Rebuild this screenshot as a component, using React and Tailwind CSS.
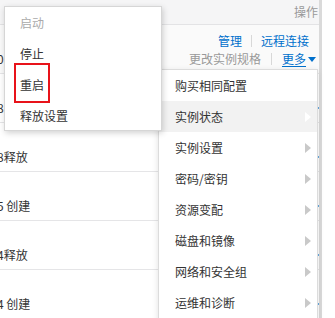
import React from "react";

const font = { fontFamily: '"Noto Sans CJK SC", "Noto Sans", sans-serif' };

function Arrow({ white }) {
  return (
    <svg width="6" height="10" viewBox="0 0 6 10" className="shrink-0">
      <path d="M0 0 L6 5 L0 10 Z" fill={white ? "#ffffff" : "#c9c9c9"} />
    </svg>
  );
}

const leftTails = [
  { t: "0", ml: "-ml-[3px]" },
  { t: "8", ml: "-ml-[3px]" },
  { t: "8释放", ml: "-ml-[3px]" },
  { t: "5 创建", ml: "-ml-[3px]" },
  { t: "4释放", ml: "-ml-[3px]" },
  { t: "4 创建", ml: "-ml-[3px]" },
];

const menu2 = [
  "购买相同配置",
  "实例状态",
  "实例设置",
  "密码/密钥",
  "资源变配",
  "磁盘和镜像",
  "网络和安全组",
  "运维和诊断",
];

export default function App() {
  return (
    <div
      className="relative w-[335px] h-[318px] overflow-hidden bg-white text-[12px] text-[#333]"
      style={font}
    >
      <div className="flex h-full">
        <div className="w-[319px] flex flex-col">
          <div className="h-[25px] shrink-0 bg-[#f5f5f6] border-b border-[#e3e3e5] flex items-center justify-end pr-[1px] text-[#999]">
            操作
          </div>
          {leftTails.map((r, i) => (
            <div
              key={i}
              className={`h-[49px] shrink-0 border-b border-[#e5e5e7] flex justify-between pt-[7px] leading-[18px] ${
                i === 0 ? "bg-[#fafafa]" : "bg-white"
              }`}
            >
              <div className="flex flex-col overflow-hidden">
                <div className="h-[18px]"></div>
                <div className={`${r.ml} whitespace-nowrap`}>{r.t}</div>
              </div>
              {i === 0 ? (
                <div className="flex flex-col items-end">
                  <div className="flex items-center pr-[10px] text-[#0070cc]">
                    <span>管理</span>
                    <span className="mx-[9px] w-px h-[12px] bg-[#d8d8d8]"></span>
                    <span>远程连接</span>
                  </div>
                  <div className="flex items-center pr-[3px]">
                    <span className="text-[#999]">更改实例规格</span>
                    <span className="mx-[10px] w-px h-[12px] bg-[#d8d8d8]"></span>
                    <span className="text-[#0070cc] underline underline-offset-2">更多</span>
                    <svg width="8" height="5" viewBox="0 0 8 5" className="ml-[2px]">
                      <path d="M0 0 L8 0 L4 5 Z" fill="#0070cc" />
                    </svg>
                  </div>
                </div>
              ) : (
                <div className="flex flex-col items-end pr-[3px]">
                  <div className="h-[18px]"></div>
                  <div className="w-[2px] h-[2px] mt-[8px] bg-[#0070cc] opacity-60 -mr-[3px]"></div>
                </div>
              )}
            </div>
          ))}
        </div>
        <div className="w-[3px] bg-[#dadada]"></div>
        <div className="flex-1 bg-white"></div>
      </div>

      {/* submenu */}
      <div className="absolute left-[158px] top-[69px] w-[160px] h-[260px] bg-white border border-[#dcdcdc] shadow-[0_2px_6px_rgba(0,0,0,0.12)]">
        {menu2.map((m, i) => (
          <div
            key={m}
            className={`h-[31px] flex items-center justify-between pl-[16px] pr-[6px] ${
              i === 1 ? "bg-[#f2f2f2]" : ""
            }`}
          >
            <span>{m}</span>
            {i > 0 && <Arrow white={i === 1} />}
          </div>
        ))}
      </div>

      {/* main menu */}
      <div className="absolute left-[4px] top-[6px] w-[158px] h-[125px] overflow-hidden bg-white border border-[#d6d6d6] shadow-[1px_2px_6px_rgba(0,0,0,0.18)] flex flex-col">
        <div className="h-[31px] shrink-0 flex items-center pl-[15px] text-[#aaa]">启动</div>
        <div className="h-[31px] shrink-0 flex items-center pl-[15px]">停止</div>
        <div className="h-[31px] shrink-0 flex items-center pl-[15px]">重启</div>
        <div className="h-[31px] shrink-0 flex items-center pl-[15px]">释放设置</div>
      </div>

      {/* annotation box */}
      <div className="absolute left-[14px] top-[63px] w-[36px] h-[40px] border-2 border-[#e8131a]"></div>
    </div>
  );
}
